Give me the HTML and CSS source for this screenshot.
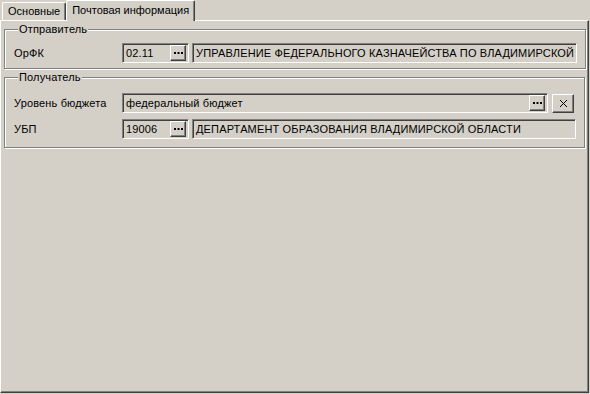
FILE: index.html
```html
<!DOCTYPE html>
<html lang="ru">
<head>
  <meta charset="UTF-8" />
  <title>Почтовая информация</title>
  <link rel="stylesheet" href="styles.css">
</head>
<body>

  <div class="window">
    <div class="tabs">
      <div class="tab">Основные</div>
      <div class="tab tab-active">Почтовая информация</div>
    </div>

    <div class="page">
      <fieldset class="group group-sender">
        <legend>Отправитель</legend>
        <div class="row">
          <div class="label">ОрФК</div>
          <div class="field field-code">
            <span class="value">02.11</span>
            <button class="dots"><svg width="9" height="2" viewBox="0 0 9 2"><rect x="0" width="2" height="2"/><rect x="3.5" width="2" height="2"/><rect x="7" width="2" height="2"/></svg></button>
          </div>
          <div class="field field-name">УПРАВЛЕНИЕ ФЕДЕРАЛЬНОГО КАЗНАЧЕЙСТВА ПО ВЛАДИМИРСКОЙ</div>
        </div>
      </fieldset>

      <fieldset class="group group-receiver">
        <legend>Получатель</legend>
        <div class="row">
          <div class="label">Уровень бюджета</div>
          <div class="field field-wide">
            <span class="value">федеральный бюджет</span>
            <button class="dots"><svg width="9" height="2" viewBox="0 0 9 2"><rect x="0" width="2" height="2"/><rect x="3.5" width="2" height="2"/><rect x="7" width="2" height="2"/></svg></button>
          </div>
          <button class="clear"><svg width="9" height="9" viewBox="0 0 9 9"><path d="M1 1 L8 8 M8 1 L1 8" stroke="#000" stroke-width="1"/></svg></button>
        </div>
        <div class="row">
          <div class="label">УБП</div>
          <div class="field field-code">
            <span class="value">19006</span>
            <button class="dots"><svg width="9" height="2" viewBox="0 0 9 2"><rect x="0" width="2" height="2"/><rect x="3.5" width="2" height="2"/><rect x="7" width="2" height="2"/></svg></button>
          </div>
          <div class="field field-name">ДЕПАРТАМЕНТ ОБРАЗОВАНИЯ ВЛАДИМИРСКОЙ ОБЛАСТИ</div>
        </div>
      </fieldset>
    </div>
  </div>

</body>
</html>
```

FILE: styles.css
```css
body {
  margin: 0;
  font-family: 'Liberation Sans', Arial, sans-serif;
  font-size: 11px;
  letter-spacing: 0.15px;
  color: #000;
  background: #d4d0c8;
}

.window {
  width: 590px;
  height: 394px;
  display: flex;
  flex-direction: column;
}

.tabs {
  display: flex;
  align-items: flex-end;
  height: 20px;
  padding-left: 2px;
  position: relative;
  z-index: 1;
  letter-spacing: 0;
}

.tab {
  height: 17px;
  line-height: 17px;
  padding: 0 5px;
  border: 1px solid;
  border-color: #fff #404040 transparent #fff;
  border-bottom: none;
  box-shadow: inset -1px 0 #808080;
  border-radius: 2px 2px 0 0;
}

.tab-active {
  height: 20px;
  line-height: 19px;
  margin-bottom: -1px;
  background: #d4d0c8;
}

.page {
  flex: 1;
  margin: 0 1px 1px 0;
  border: 1px solid;
  border-color: #fff #404040 #404040 #fff;
  box-shadow: inset -1px -1px #808080;
  padding: 2px 3px 0 3px;
}

.group {
  margin: 0;
  padding: 7px 8px 5px 9px;
  border: 1px solid #808080;
  box-shadow: inset 1px 1px #fff, 1px 1px #fff;
}

.group-receiver {
  margin-top: 2px;
  padding-top: 9px;
  padding-bottom: 8px;
}

.group legend {
  padding: 0 1px;
  margin-left: 4px;
  line-height: 13px;
  background: #d4d0c8;
}

.row {
  display: flex;
  align-items: center;
  height: 20px;
  margin-bottom: 6px;
}

.row:last-child {
  margin-bottom: 0;
}

.label {
  width: 108px;
}

.field {
  box-sizing: border-box;
  height: 20px;
  display: flex;
  align-items: center;
  padding: 0 2px 0 3px;
  border: 1px solid;
  border-color: #808080 #fff #fff #808080;
  box-shadow: inset 1px 1px #404040;
  white-space: nowrap;
  overflow: hidden;
}

.value {
  flex: 1;
}

.field-code {
  width: 67px;
  margin-right: 3px;
}

.field-name {
  flex: 1;
}

.field-wide {
  flex: 1;
  margin-right: 4px;
}

.dots,
.clear {
  box-sizing: border-box;
  display: flex;
  align-items: center;
  justify-content: center;
  padding: 0;
  background: #d4d0c8;
  border: 1px solid;
  border-color: #fff #404040 #404040 #fff;
  box-shadow: inset -1px -1px #808080;
}

.dots {
  width: 16px;
  height: 16px;
}

.clear {
  width: 22px;
  height: 19px;
  margin-right: 2px;
}
```
